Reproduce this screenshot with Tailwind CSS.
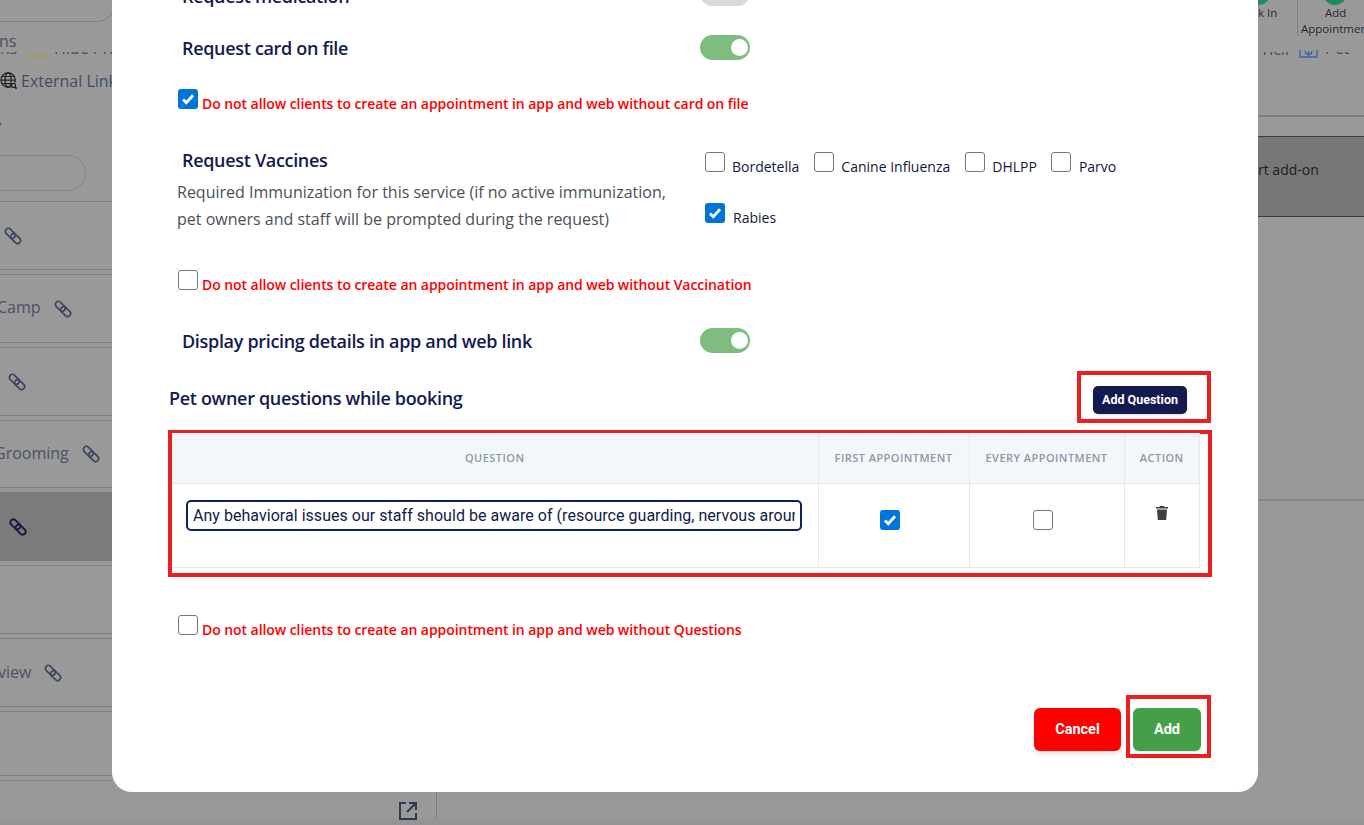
<!DOCTYPE html>
<html><head><script src="https://cdn.jsdelivr.net/npm/@tailwindcss/browser@4"></script></head>
<body class="h-[825px] overflow-hidden bg-[#999999] font-['Open_Sans',sans-serif] relative">
<!-- Dimmed page behind -->
<div class="absolute left-0 bottom-0 w-full h-[6px] bg-[#959595]"></div>
<aside class="absolute left-0 top-0 w-[437px] h-[825px] overflow-hidden text-[#434c66] text-base">
  <div class="h-[22px] w-[115px] -ml-px border border-[#808080] rounded-br-2xl border-t-0"></div>
  <div class="h-[20px] mt-[9px] leading-[20px] -ml-[1px] text-[#4a4f5e]">ns</div>
  <div class="relative mt-px h-[7px] w-[112px]">
    <div class="absolute top-0 left-0 w-[17px] h-[2px] overflow-hidden"><div class="-mt-[14px] leading-[20px]">ns</div></div>
    <svg class="absolute left-[29px] top-0 w-[21px] h-[7px]" viewBox="0 0 21 7" fill="none" stroke="#a89a20" stroke-width="1"><path d="M0 4h16M2 1v3M7 1v3M12 1v3M15 3l5 3"/></svg>
    <div class="absolute top-0 left-[54px] w-[58px] h-[2px] overflow-hidden"><div class="-mt-[14px] leading-[20px] whitespace-nowrap">Hide Pricing</div></div>
  </div>
  <div class="flex items-center gap-[3px] mt-[11px] h-[22px]">
    <svg class="w-[18px] h-[20px] text-[#222]" viewBox="0 0 20 22" fill="none" stroke="currentColor" stroke-width="1.3"><circle cx="9" cy="10" r="8"/><ellipse cx="9" cy="10" rx="3.5" ry="8"/><path d="M1 10h16M2 6h14M2 14h14"/><circle cx="15" cy="16" r="2.2" fill="#999"/><path d="M16.5 17.5l2 2" stroke-width="2"/></svg>
    <span>External Link</span>
  </div>
  <div class="mt-[30px] h-[8px] -ml-[5px] text-xs leading-[8px] text-[#333]">y</div>
  <div class="mt-[25px] w-[86px] h-[36px] border border-[#868686] rounded-r-[18px] border-l-0"></div>
  <div class="mt-[10px] w-[112px] flex flex-col gap-[4px] text-[#4a5266]">
    <div class="h-[69px] border-y border-[#808080] pl-[4px] flex items-center"><svg class="w-[18px] h-[18px] text-[#3d4660]" viewBox="0 0 18 18" fill="none" stroke="currentColor" stroke-width="1.700"><g transform="rotate(45 9 9)"><rect x="-0.500" y="6" width="11.500" height="6" rx="3"/><rect x="7" y="6" width="11.500" height="6" rx="3"/></g></svg></div>
    <div class="h-[69px] border-y border-[#808080] flex items-center gap-[13px] -ml-[3px]"><span class="mb-[4px]">Camp</span><svg class="w-[18px] h-[18px] text-[#3d4660]" viewBox="0 0 18 18" fill="none" stroke="currentColor" stroke-width="1.700"><g transform="rotate(45 9 9)"><rect x="-0.500" y="6" width="11.500" height="6" rx="3"/><rect x="7" y="6" width="11.500" height="6" rx="3"/></g></svg></div>
    <div class="h-[69px] border-y border-[#808080] pl-[8px] flex items-center"><svg class="w-[18px] h-[18px] text-[#3d4660]" viewBox="0 0 18 18" fill="none" stroke="currentColor" stroke-width="1.700"><g transform="rotate(45 9 9)"><rect x="-0.500" y="6" width="11.500" height="6" rx="3"/><rect x="7" y="6" width="11.500" height="6" rx="3"/></g></svg></div>
    <div class="h-[68px] border-y border-[#808080] flex items-center gap-[13px] -ml-[6px]"><span class="mb-[2px]">Grooming</span><svg class="w-[18px] h-[18px] text-[#3d4660]" viewBox="0 0 18 18" fill="none" stroke="currentColor" stroke-width="1.700"><g transform="rotate(45 9 9)"><rect x="-0.500" y="6" width="11.500" height="6" rx="3"/><rect x="7" y="6" width="11.500" height="6" rx="3"/></g></svg></div>
    <div class="h-[69px] bg-[#7b7b7b] pl-[9px] flex items-center"><svg class="w-[18px] h-[18px] text-[#141c3f]" viewBox="0 0 18 18" fill="none" stroke="currentColor" stroke-width="1.900"><g transform="rotate(45 9 9)"><rect x="-0.500" y="6" width="11.500" height="6" rx="3"/><rect x="7" y="6" width="11.500" height="6" rx="3"/></g></svg></div>
    <div class="h-[69px] border-y border-[#808080]"></div>
    <div class="h-[69px] border-y border-[#808080] flex items-center gap-[13px] -ml-[2px]"><span class="mb-[2px]">view</span><svg class="w-[18px] h-[18px] text-[#3d4660]" viewBox="0 0 18 18" fill="none" stroke="currentColor" stroke-width="1.700"><g transform="rotate(45 9 9)"><rect x="-0.500" y="6" width="11.500" height="6" rx="3"/><rect x="7" y="6" width="11.500" height="6" rx="3"/></g></svg></div>
    <div class="h-[65px] border-y border-[#808080]"></div>
    <div class="h-[30px] border-t border-[#808080]"></div>
  </div>
  <svg class="absolute left-[398px] top-[801px] w-5 h-5 text-[#2f3a55]" viewBox="0 0 20 20" fill="none" stroke="currentColor" stroke-width="2"><path d="M8 2H2v16h16v-6M11 2h7v7M18 2 9 11"/></svg>
  <div class="absolute left-[436px] top-[792px] w-px h-[27px] bg-[#808080]"></div>
</aside>
<section class="absolute right-0 top-0 w-[106px] h-[825px] overflow-hidden text-[11.5px] text-[#2a2a2a]">
  <div class="h-[36px] relative">
    <div class="absolute left-0 -top-[14px] w-[13px] h-[19px] rounded-br-full bg-[#1f8a5c]"></div>
    <div class="absolute left-[65px] -top-[14px] w-[24px] h-[19px] rounded-b-full bg-[#1f8a5c]"></div>
    <div class="absolute left-0 top-[5px] leading-[16px]">k In</div>
    <div class="absolute left-[39px] top-0 w-px h-[36px] bg-[#808080]"></div>
    <div class="absolute left-[67px] top-[5px] leading-[16px]">Add</div>
    <div class="absolute left-[43px] top-[21px] leading-[16px] whitespace-nowrap">Appointment</div>
  </div>
  <div class="relative h-[79px]">
    <div class="absolute left-0 top-[16px] w-[32px] h-[4px] overflow-hidden text-base text-[#434c66]"><div class="-mt-[13px] -ml-[5px] leading-[20px]">Pricing</div></div>
    <svg class="absolute left-[41px] top-[14px] w-[19px] h-[8px]" viewBox="0 0 19 8" fill="none" stroke="#3d63a8" stroke-width="1.400"><path d="M1 0v7h17V0M6 1l1 3h5l1-3M9.500 1v6"/></svg>
    <div class="absolute left-[67px] top-[16px] w-[39px] h-[2px] overflow-hidden text-base text-[#434c66]"><div class="-mt-[14px] leading-[20px]">Pet Go</div></div>
  </div>
  <div class="h-[2px] bg-[#7f7f7f]"></div>
  <div class="h-[19px]"></div>
  <div class="h-[81px] bg-[#777777] border-y border-[#2f3c5c] flex items-center pb-[14px] text-[14px] text-[#1e1e1e] whitespace-nowrap">rt add-on</div>
  <div class="h-[282px]"></div>
  <div class="h-[2px] bg-[#858585]"></div>
</section>
<!-- Modal -->
<main class="absolute left-[112px] top-[-32px] w-[1146px] h-[824px] bg-white rounded-b-[20px] text-[#121a4f]">
  <div class="absolute left-[70px] top-[16px] text-lg font-semibold leading-[24px] tracking-[-0.32px]">Request medication</div>
  <div class="absolute left-[588px] top-[13px] w-[50px] h-[25px] rounded-full bg-[#d9d9d9]"></div>

  <div class="pt-[68px] pl-[70px] pr-[508px] flex justify-between items-center h-[92px]">
    <span class="text-lg font-semibold leading-[24px] tracking-[-0.32px]">Request card on file</span>
    <span class="w-[50px] h-[25px] mb-[1px] rounded-full bg-[#7dbd7f] flex items-center justify-end pr-[2px]"><span class="w-[17px] h-[17px] rounded-full bg-white"></span></span>
  </div>
  <label class="flex items-start pl-[66px] mt-[29px] h-[22px]">
    <span class="w-5 h-5 rounded-[3px] bg-[#0075d9] flex items-center justify-center"><svg class="w-[14px] h-[14px]" viewBox="0 0 14 14" fill="none" stroke="#fff" stroke-width="2.800"><path d="M2 7.500l3.300 3.300L12 3.200"/></svg></span>
    <span class="ml-[4px] text-sm font-semibold text-[#ff0000] mt-[5px] leading-[19px] tracking-[-0.065px]">Do not allow clients to create an appointment in app and web without card on file</span>
  </label>

  <div class="flex mt-[34px] pl-[65px] h-[100px]">
    <div class="w-[528px]">
      <div class="pl-[5px] text-lg font-semibold leading-[24px] h-[26px] mt-[3px] tracking-[-0.32px]">Request Vaccines</div>
      <p class="text-base text-[#4b4f57] leading-[27px] mt-[5px]">Required Immunization for this service (if no active immunization,<br>pet owners and staff will be prompted during the request)</p>
    </div>
    <div class="flex flex-wrap w-[430px] text-sm text-[#11173a] content-start pt-[7px]">
      <label class="flex items-start h-[51px] mr-[15px]"><span class="w-5 h-5 rounded-[3px] border border-[#767676] bg-white"></span><span class="ml-[7px] mt-[5px] leading-[19px]">Bordetella</span></label>
      <label class="flex items-start h-[51px] mr-[15px]"><span class="w-5 h-5 rounded-[3px] border border-[#767676] bg-white"></span><span class="ml-[7px] mt-[5px] leading-[19px]">Canine Influenza</span></label>
      <label class="flex items-start h-[51px] mr-[14px]"><span class="w-5 h-5 rounded-[3px] border border-[#767676] bg-white"></span><span class="ml-[7px] mt-[5px] leading-[19px]">DHLPP</span></label>
      <label class="flex items-start h-[51px]"><span class="w-5 h-5 rounded-[3px] border border-[#767676] bg-white"></span><span class="ml-[8px] mt-[5px] leading-[19px]">Parvo</span></label>
      <label class="flex items-start w-full"><span class="w-5 h-5 rounded-[3px] bg-[#0075d9] flex items-center justify-center"><svg class="w-[14px] h-[14px]" viewBox="0 0 14 14" fill="none" stroke="#fff" stroke-width="2.800"><path d="M2 7.500l3.300 3.300L12 3.200"/></svg></span><span class="ml-[8px] mt-[5px] leading-[19px]">Rabies</span></label>
    </div>
  </div>

  <label class="flex items-start pl-[66px] mt-[25px] h-[22px]">
    <span class="w-5 h-5 rounded-[3px] border border-[#767676] bg-white"></span>
    <span class="ml-[4px] text-sm font-semibold text-[#ff0000] mt-[5px] leading-[19px] tracking-[-0.065px]">Do not allow clients to create an appointment in app and web without Vaccination</span>
  </label>

  <div class="pl-[70px] pr-[508px] flex justify-between items-center mt-[36px] h-[26px]">
    <span class="text-lg font-semibold leading-[24px] tracking-[-0.32px]">Display pricing details in app and web link</span>
    <span class="w-[50px] h-[25px] mb-[1px] rounded-full bg-[#7dbd7f] flex items-center justify-end pr-[2px]"><span class="w-[17px] h-[17px] rounded-full bg-white"></span></span>
  </div>

  <div class="flex items-center justify-between pl-[57px] pr-[47px] mt-[17px] h-[52px]">
    <span class="text-lg font-semibold leading-[24px] tracking-[-0.32px] mt-[1px]">Pet owner questions while booking</span>
    <div class="w-[134px] h-[52px] border-[4px] border-[#e8201f] pl-[12px] pt-[11px]">
      <button class="block w-[94px] h-[28px] rounded-[5px] bg-[#121a4f] text-white text-[12.500px] font-bold font-['Roboto',sans-serif] shadow-sm">Add Question</button>
    </div>
  </div>

  <div class="ml-[56px] mr-[46px] mt-[7px] h-[147px] border-[4px] border-[#e8201f]">
    <table class="w-[1028px] -mt-px border-collapse table-fixed">
      <thead><tr class="h-[50px] bg-[#f4f7fa] text-[11px] font-semibold text-[#8a98a8] tracking-[0.45px]">
        <th class="w-[646px] border-r border-b border-[#e6e9ed] font-semibold">QUESTION</th>
        <th class="w-[151px] border-x border-b border-[#e6e9ed] font-semibold">FIRST APPOINTMENT</th>
        <th class="w-[155px] border-x border-b border-[#e6e9ed] font-semibold">EVERY APPOINTMENT</th>
        <th class="border-x border-b border-[#e6e9ed] font-semibold">ACTION</th>
      </tr></thead>
      <tbody><tr class="h-[84px]">
        <td class="border-r border-b border-[#e6e9ed] align-top pt-[16px] pl-[14px]">
          <div class="w-[616px] h-[31px] border-2 border-[#0f2257] rounded-[5px] px-[5px] font-['Roboto',sans-serif] text-base leading-[27px] text-[#0f1a4a]"><div class="overflow-hidden whitespace-nowrap tracking-[0.035px]">Any behavioral issues our staff should be aware of (resource guarding, nervous around</div></div>
        </td>
        <td class="border-x border-b border-[#e6e9ed] align-top pt-[26px] pr-[7px]"><span class="mx-auto w-5 h-5 rounded-[3px] bg-[#0075d9] flex items-center justify-center"><svg class="w-[14px] h-[14px]" viewBox="0 0 14 14" fill="none" stroke="#fff" stroke-width="2.800"><path d="M2 7.500l3.300 3.300L12 3.200"/></svg></span></td>
        <td class="border-x border-b border-[#e6e9ed] align-top pt-[26px] pr-[7px]"><span class="block mx-auto w-5 h-5 rounded-[3px] border border-[#767676] bg-white"></span></td>
        <td class="border-x border-b border-[#e6e9ed] align-top pt-[22px] pl-[1px]"><svg class="mx-auto w-[12px] h-[14px] text-[#3f3f3f]" viewBox="0 0 12 14" fill="currentColor"><path d="M4 0h4l.6 1H12v1.600H0V1h3.400zM1 3.600h10L10.200 14H1.800z"/></svg></td>
      </tr></tbody>
    </table>
  </div>

  <label class="flex items-start pl-[66px] mt-[38px] h-[22px]">
    <span class="w-5 h-5 rounded-[3px] border border-[#767676] bg-white"></span>
    <span class="ml-[4px] text-sm font-semibold text-[#ff0000] mt-[5px] leading-[19px] tracking-[-0.065px]">Do not allow clients to create an appointment in app and web without Questions</span>
  </label>

  <div class="flex justify-end items-start pr-[47px] mt-[58px] gap-[5px]">
    <button class="w-[87px] h-[43px] mt-[13px] rounded-[6px] bg-[#ff0000] text-white text-[14.500px] font-bold font-['Roboto',sans-serif] shadow-md">Cancel</button>
    <div class="w-[85px] h-[63px] border-[4px] border-[#e8201f] pl-[3px] pt-[9px]">
      <button class="block w-[68px] h-[43px] rounded-[6px] bg-[#43a047] text-white text-[14.500px] font-bold font-['Roboto',sans-serif] shadow-sm">Add</button>
    </div>
  </div>
</main>
</body></html>
